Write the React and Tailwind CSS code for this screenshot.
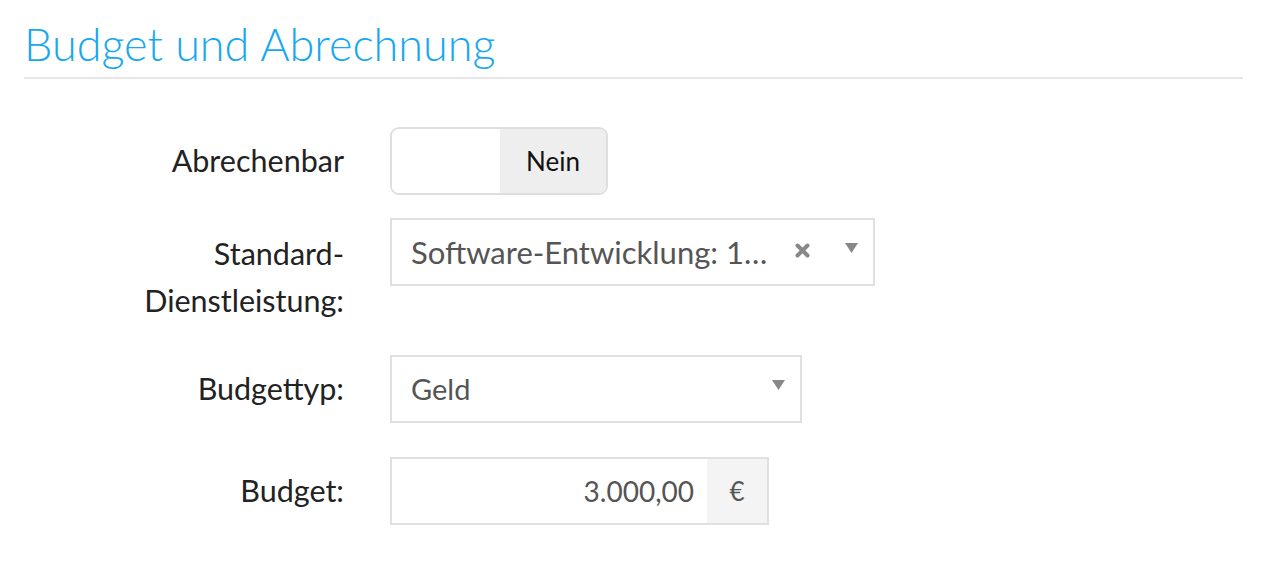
function Caret() {
  return (
    <svg width="13" height="10" viewBox="0 0 13 10" className="-mt-[9px] shrink-0">
      <path d="M0 0 L13 0 L6.5 10 Z" fill="#888" />
    </svg>
  );
}

export default function App() {
  return (
    <div className="min-h-screen bg-white font-['Lato',sans-serif]">
      <div className="pl-[24px] pr-[27px] pt-[16px]">
        <h1 className="text-[45px] leading-[56px] text-[#17a8ef] font-light">
          Budget und Abrechnung
        </h1>
        <div className="h-[2px] bg-[#e6e6e6] mt-[5px]" />
      </div>

      <div className="mt-[48px] flex flex-col">
        {/* Abrechenbar */}
        <div className="flex items-center">
          <div className="w-[344px] text-right text-[30.5px] text-[#222]">Abrechenbar</div>
          <div className="ml-[46px] flex h-[68px] w-[218px] rounded-[9px] border-2 border-[#dedede] overflow-hidden">
            <div className="w-[108px] bg-white" />
            <div className="flex-1 bg-[#eeeeee] flex items-center justify-center text-[26px] text-[#111]">
              Nein
            </div>
          </div>
        </div>

        {/* Standard-Dienstleistung */}
        <div className="flex items-start mt-[23px]">
          <div className="w-[344px] text-right text-[30.5px] leading-[47px] text-[#222] pt-[12px] pb-[9px]">
            Standard-
            <br />
            Dienstleistung:
          </div>
          <div className="ml-[46px] flex items-center h-[68px] w-[485px] border-2 border-[#e0e0e0] pl-[19px] pr-[15px]">
            <span className="flex-1 text-[31px] text-[#555] whitespace-nowrap">Software-Entwicklung: 1…</span>
            <svg width="15" height="15" viewBox="0 0 15 15" className="mr-[35px] -mt-[3px] shrink-0">
              <path d="M2.5 2.5 L12.5 12.5 M12.5 2.5 L2.5 12.5" stroke="#888" strokeWidth="4" strokeLinecap="round" />
            </svg>
            <Caret />
          </div>
        </div>

        {/* Budgettyp */}
        <div className="flex items-center mt-[22px]">
          <div className="w-[344px] text-right text-[30.5px] text-[#222]">Budgettyp:</div>
          <div className="ml-[46px] flex items-center h-[68px] w-[412px] border-2 border-[#e0e0e0] pl-[19px] pr-[15px]">
            <span className="flex-1 text-[29px] text-[#555]">Geld</span>
            <Caret />
          </div>
        </div>

        {/* Budget */}
        <div className="flex items-center mt-[34px]">
          <div className="w-[344px] text-right text-[30.5px] text-[#222]">Budget:</div>
          <div className="ml-[46px] flex h-[68px] w-[379px] border-2 border-[#e0e0e0]">
            <div className="flex-1 flex items-center justify-end pr-[13px] text-[28px] text-[#555]">3.000,00</div>
            <div className="w-[60px] bg-[#f4f4f4] flex items-center justify-center text-[26px] text-[#555]">€</div>
          </div>
        </div>
      </div>
    </div>
  );
}
